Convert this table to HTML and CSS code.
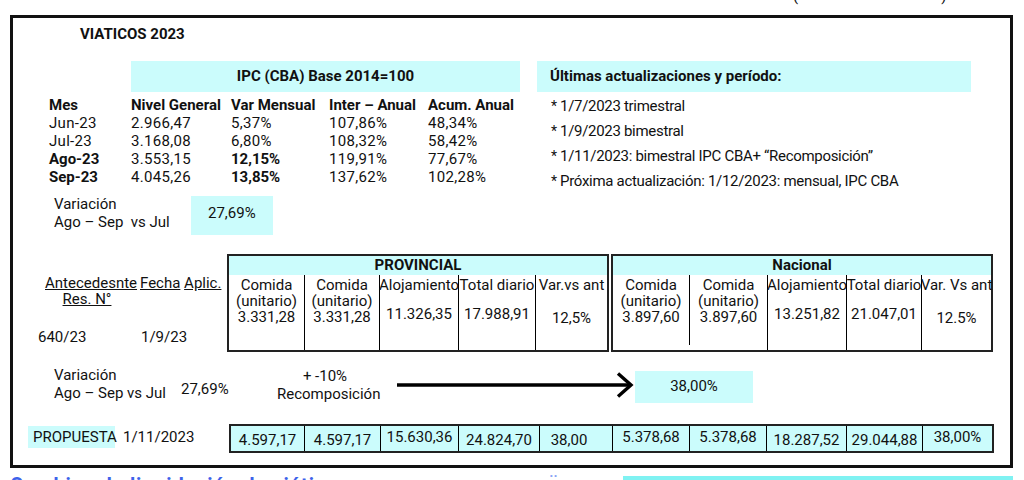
FILE: index.html
```html
<!DOCTYPE html>
<html lang="es">
<head>
<meta charset="utf-8">
<title>Viaticos 2023</title>
<link rel="stylesheet" href="styles.css">
</head>
<body>
<div class="top-strip"><span class="paren">(</span><span class="paren paren-r">)</span></div>
<div class="frame">
  <div class="title">VIATICOS 2023</div>

  <div class="ipc-row">
    <div class="ipc">
      <div class="cyan ipc-head">IPC (CBA) Base 2014=100</div>
      <b>Mes</b><b>Nivel General</b><b>Var Mensual</b><b>Inter – Anual</b><b>Acum. Anual</b>
      <span>Jun-23</span><span>2.966,47</span><span>5,37%</span><span>107,86%</span><span>48,34%</span>
      <span>Jul-23</span><span>3.168,08</span><span>6,80%</span><span>108,32%</span><span>58,42%</span>
      <b>Ago-23</b><span>3.553,15</span><b>12,15%</b><span>119,91%</span><span>77,67%</span>
      <b>Sep-23</b><span>4.045,26</span><b>13,85%</b><span>137,62%</span><span>102,28%</span>
    </div>
    <div class="updates">
      <div class="cyan upd-head">Últimas actualizaciones y período:</div>
      <ul class="upd-list">
        <li><span class="star">*</span>1/7/2023 trimestral</li>
        <li><span class="star">*</span>1/9/2023 bimestral</li>
        <li><span class="star">*</span>1/11/2023: bimestral IPC CBA+ “Recomposición”</li>
        <li><span class="star">*</span>Próxima actualización: 1/12/2023: mensual, IPC CBA</li>
      </ul>
    </div>
  </div>

  <div class="var-row">
    <div class="var-label">Variación<br>Ago – Sep&nbsp; vs Jul</div>
    <div class="cyan var-box">27,69%</div>
  </div>

  <div class="mid">
    <div class="ante">
      <div class="ante-labels">
        <div class="ante-res"><u>Antecedesnte</u><br><u>Res. N°</u></div>
        <div class="ante-fecha"><u>Fecha</u> <u>Aplic.</u></div>
      </div>
      <div class="ante-values">
        <span class="ante-num">640/23</span>
        <span>1/9/23</span>
      </div>
    </div>

    <div class="tbl tbl-prov">
      <div class="tbl-head">PROVINCIAL</div>
      <div class="tbl-body">
        <div class="cell"><span>Comida</span><span>(unitario)</span><span>3.331,28</span></div>
        <div class="cell"><span>Comida</span><span>(unitario)</span><span>3.331,28</span></div>
        <div class="cell"><span>Alojamiento</span><span class="val">11.326,35</span></div>
        <div class="cell"><span>Total diario</span><span class="val">17.988,91</span></div>
        <div class="cell"><span>Var.vs ant</span><span class="val val-low">12,5%</span></div>
      </div>
    </div>

    <div class="tbl tbl-nac">
      <div class="tbl-head">Nacional</div>
      <div class="tbl-body">
        <div class="cell"><span>Comida</span><span>(unitario)</span><span>3.897,60</span></div>
        <div class="cell cell-short"><span>Comida</span><span>(unitario)</span><span>3.897,60</span></div>
        <div class="cell"><span>Alojamiento</span><span class="val">13.251,82</span></div>
        <div class="cell"><span>Total diario</span><span class="val">21.047,01</span></div>
        <div class="cell"><span>Var. Vs ant</span><span class="val val-low">12.5%</span></div>
      </div>
    </div>
  </div>

  <div class="var2">
    <div class="var2-label">Variación<br>Ago – Sep vs Jul</div>
    <div class="var2-pct">27,69%</div>
    <div class="var2-rec">+ -10%<br>Recomposición</div>
    <svg class="arrow" width="238" height="26" viewBox="0 0 238 26">
      <line x1="0" y1="13" x2="233" y2="13" stroke="#000" stroke-width="3.4"/>
      <polyline points="221,1.5 234,13 221,24.5" fill="none" stroke="#000" stroke-width="3.4"/>
    </svg>
    <div class="cyan var2-box">38,00%</div>
  </div>

  <div class="prop">
    <div class="cyan prop-label">PROPUESTA</div>
    <div class="prop-date">1/11/2023</div>
    <div class="prop-tbl">
      <div class="pc">4.597,17</div>
      <div class="pc">4.597,17</div>
      <div class="pc up">15.630,36</div>
      <div class="pc">24.824,70</div>
      <div class="pc pc-left">38,00</div>
      <div class="pc up">5.378,68</div>
      <div class="pc up">5.378,68</div>
      <div class="pc">18.287,52</div>
      <div class="pc">29.044,88</div>
      <div class="pc up">38,00%</div>
    </div>
  </div>
</div>
<div class="bottom-strip">
  <div class="next-title">Cambios de liquidación de viáticos</div>
  <div class="next-mark">¨</div>
  <div class="next-bar"></div>
</div>
</body>
</html>
```

FILE: styles.css
```css
* { box-sizing: border-box; }
html, body { margin: 0; padding: 0; background: #fff; }
body {
  width: 1024px;
  height: 480px;
  overflow: hidden;
  font-family: Roboto, "Liberation Sans", sans-serif;
  font-size: 15px;
  color: #111;
}
b { font-weight: bold; }
.cyan { background: #cbfcfc; }

/* cut-off text above the frame */
.top-strip {
  height: 15px;
  overflow: hidden;
  display: flex;
  padding-left: 793px;
}
.paren { display: block; line-height: 16px; margin-top: -12px; font-size: 15px; }
.paren-r { margin-left: 143px; }

.frame {
  margin-left: 10px;
  width: 1003px;
  height: 453px;
  border: 3px solid #111;
  overflow: hidden;
}

.title {
  font-weight: bold;
  line-height: 18px;
  margin-top: 7px;
  padding-left: 67px;
}

.ipc-row {
  display: flex;
  align-items: flex-start;
  margin-top: 18px;
  padding-left: 36px;
}
.ipc {
  display: grid;
  grid-template-columns: 82px 100px 98px 99px 92px;
  line-height: 18px;
  white-space: nowrap;
}
.ipc span { letter-spacing: 0.3px; }
.ipc-head {
  grid-column: 2 / 6;
  height: 31px;
  line-height: 31px;
  text-align: center;
  font-weight: bold;
  margin-bottom: 4px;
}
.updates { margin-left: 17px; }
.upd-head {
  width: 434px;
  height: 31px;
  line-height: 31px;
  padding-left: 13px;
  font-weight: bold;
}
.upd-list {
  list-style: none;
  margin: 0;
  padding: 2px 0 0 14px;
  line-height: 25px;
  letter-spacing: -0.3px;
}
.star { display: inline-block; width: 9px; font-size: 14px; }

.var-row {
  display: flex;
  margin-top: 2px;
  padding-left: 41px;
}
.var-label { width: 137px; line-height: 17.5px; }
.var-box {
  width: 82px;
  height: 39px;
  padding: 8px 0 0 17px;
  line-height: 18px;
}

.mid {
  display: flex;
  margin-top: 19px;
}
.ante { width: 214px; line-height: 16px; }
.ante-labels { display: flex; padding-top: 21px; white-space: nowrap; }
.ante-res { margin-left: 32px; width: 84px; text-align: center; }
.ante-fecha { margin-left: 11px; }
.ante-values { display: flex; margin-top: 21px; padding-top: 1px; }
.ante-num { margin-left: 25px; width: 103px; }

.tbl {
  width: 382px;
  height: 98px;
  border: 2px solid #222;
  display: flex;
  flex-direction: column;
}
.tbl-nac { margin-left: 2px; }
.tbl-head {
  height: 19px;
  line-height: 19px;
  background: #cbfcfc;
  text-align: center;
  font-weight: bold;
}
.tbl-body {
  flex: 1;
  display: grid;
}
.tbl-prov .tbl-body { grid-template-columns: 75px 75px 79px 77px 72px; }
.tbl-nac .tbl-body { grid-template-columns: 76px 78px 79px 75px 70px; }
.cell {
  display: flex;
  flex-direction: column;
  align-items: center;
  padding-top: 2px;
  line-height: 16px;
  white-space: nowrap;
}
.cell + .cell { border-left: 1px solid #000; }
.cell + .cell-short {
  border-left: 0;
  padding-left: 1px;
  background: linear-gradient(#000, #000) left top / 1px calc(100% - 5px) no-repeat;
}
.cell .val { margin-top: 13px; }
.cell .val-low { margin-top: 17px; }

.var2 {
  display: flex;
  align-items: flex-start;
  margin-top: 15px;
  padding-left: 41px;
}
.var2-label { width: 127px; line-height: 17.5px; }
.var2-pct { width: 96px; padding-top: 13px; line-height: 18px; }
.var2-rec { width: 96px; text-align: center; line-height: 18px; }
.arrow { display: block; margin-left: 24px; margin-top: 5px; }
.var2-box {
  width: 118px;
  height: 32px;
  margin-top: 4px;
  line-height: 31px;
  text-align: center;
}

.prop {
  display: flex;
  align-items: flex-start;
  margin-top: 21px;
}
.prop-label {
  margin-left: 15px;
  margin-top: 2px;
  width: 87px;
  height: 22px;
  line-height: 22px;
  padding-left: 5px;
}
.prop-date {
  margin-left: 8px;
  margin-top: 2px;
  width: 106px;
  line-height: 22px;
}
.prop-tbl {
  display: grid;
  grid-template-columns: 73px 76px 78px 81px 73px 77px 77px 80px 76px 70px;
  width: 765px;
  height: 29px;
  border: 2px solid #222;
  background: #cbfcfc;
}
.pc {
  display: flex;
  align-items: center;
  justify-content: center;
  padding-top: 2px;
}
.pc + .pc { border-left: 1px solid #000; }
.pc.up { padding-top: 0; padding-bottom: 4px; }
.pc-left { padding-right: 14px; }

.bottom-strip {
  display: flex;
  align-items: flex-start;
  height: 12px;
}
.next-title {
  margin-left: 10px;
  margin-top: 6px;
  color: #3d62ea;
  font-weight: bold;
  font-size: 20px;
  line-height: 22px;
  letter-spacing: 0.8px;
}
.next-mark {
  margin-left: 200px;
  margin-top: 4px;
  color: #8aa4f5;
  font-size: 20px;
  line-height: 22px;
}
.next-bar {
  margin-left: auto;
  margin-right: 11px;
  margin-top: 8px;
  width: 390px;
  height: 8px;
  background: #7ff2f2;
}
```
